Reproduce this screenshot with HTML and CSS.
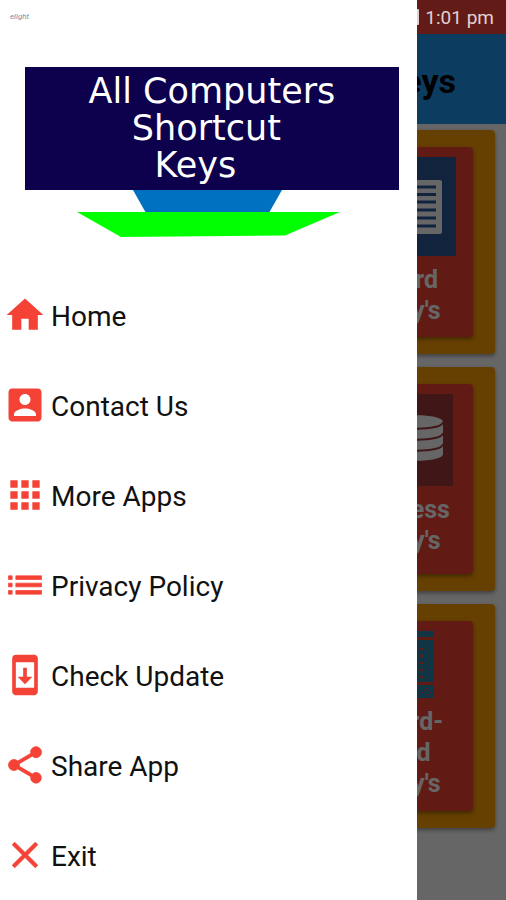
FILE: index.html
```html
<!DOCTYPE html>
<html lang="en">
<head>
<meta charset="utf-8">
<meta name="viewport" content="width=device-width, initial-scale=1">
<title>All Computers Shortcut Keys</title>
<link rel="stylesheet" href="styles.css">
</head>
<body>
<div class="app">
  <div class="status">
    <span class="battery"></span>
    <span>1:01 pm</span>
  </div>
  <div class="screen">
    <header class="appbar"><h1 class="appbar-title">Computer Shortcut Keys</h1></header>
    <main class="cards">
      <section class="card">
        <div class="card-inner">
          <svg class="pic" width="154" height="99" viewBox="0 0 154 99" aria-hidden="true">
            <rect width="154" height="99" fill="#2b579a"/>
            <rect x="80" y="23" width="60" height="54" rx="2" fill="#fff"/>
            <path d="M80 30h54M80 37.500h54M80 45h54M80 53h54M80 61h54M80 69h54" stroke="#2b579a" stroke-width="3"/>
          </svg>
          <h2 class="card-title">MS - Word<br>Short key's</h2>
        </div>
      </section>
      <section class="card">
        <div class="card-inner">
          <svg class="pic" width="148" height="92" viewBox="0 0 148 92" aria-hidden="true">
            <rect width="148" height="92" fill="#a4373a"/>
            <path d="M86 28c0-9 52-9 52 0v32c0 9-52 9-52 0z" fill="#fff"/>
            <path d="M86 28c0 9 52 9 52 0M86 39c0 9 52 9 52 0M86 50c0 9 52 9 52 0" fill="none" stroke="#a4373a" stroke-width="2"/>
          </svg>
          <h2 class="card-title">MS - Access<br>Short key's</h2>
        </div>
      </section>
      <section class="card">
        <div class="card-inner">
          <svg class="pic" width="110" height="67" viewBox="0 0 110 67" aria-hidden="true">
            <path d="M70 0h40v6H70zM70 9h40v42H70zM70 54h40v13H70z" fill="#2d86b0"/>
            <path d="M80 18h20M80 25h20M80 32h20M80 39h20M80 46h20" stroke="#f44336" stroke-width="2"/>
            <path d="M94 12v38M89 12v38" stroke="#2d86b0" stroke-width="2"/>
            <path d="M97 63l7-7M103 65l5-5" stroke="#f44336" stroke-width="1"/>
          </svg>
          <h2 class="card-title">MS - Word-<br>MS - Pad<br>Short key's</h2>
        </div>
      </section>
    </main>
  </div>
  <div class="scrim"></div>
  <aside class="drawer">
    <div class="mark">elight</div>
    <div class="logo">
      <div class="logo-text">All Computers<br>Shortcut&nbsp;<br>Keys&nbsp;&nbsp;&nbsp;</div>
      <svg class="stand" viewBox="0 0 374 48" aria-hidden="true">
        <path d="M108 0h149l-13 23H121z" fill="#0070c0"/>
        <path d="M52 22h263l-55 23.500L96 47z" fill="#0f0"/>
      </svg>
    </div>
    <nav class="menu">
      <a class="item" href="#home"><svg class="icon" viewBox="0 0 24 24" aria-hidden="true"><path d="M10 20v-6h4v6h5v-8h3L12 3 2 12h3v8z"/></svg><span class="label">Home</span></a>
      <a class="item" href="#contact"><svg class="icon" viewBox="0 0 24 24" aria-hidden="true"><path d="M3 5v14c0 1.100.89 2 2 2h14c1.100 0 2-.9 2-2V5c0-1.100-.9-2-2-2H5c-1.110 0-2 .9-2 2zm12 4c0 1.660-1.340 3-3 3s-3-1.340-3-3 1.340-3 3-3 3 1.340 3 3zm-9 8c0-2 4-3.100 6-3.100s6 1.100 6 3.100v1H6v-1z"/></svg><span class="label">Contact Us</span></a>
      <a class="item" href="#apps"><svg class="icon" viewBox="0 0 24 24" aria-hidden="true"><path d="M4 8h4V4H4v4zm6 12h4v-4h-4v4zm-6 0h4v-4H4v4zm0-6h4v-4H4v4zm6 0h4v-4h-4v4zm6-10v4h4V4h-4zm-6 4h4V4h-4v4zm6 6h4v-4h-4v4zm0 6h4v-4h-4v4z"/></svg><span class="label">More Apps</span></a>
      <a class="item" href="#privacy"><svg class="icon heavy" viewBox="0 0 24 24" aria-hidden="true"><path d="M3 13h2v-2H3v2zm0 4h2v-2H3v2zm0-8h2V7H3v2zm4 4h14v-2H7v2zm0 4h14v-2H7v2zM7 7v2h14V7H7z"/></svg><span class="label">Privacy Policy</span></a>
      <a class="item" href="#update"><svg class="icon" viewBox="0 0 24 24" aria-hidden="true"><path d="M17 1.010L7 1c-1.100 0-2 .9-2 2v18c0 1.100.9 2 2 2h10c1.100 0 2-.9 2-2V3c0-1.100-.9-1.990-2-1.990zM17 19H7V5h10v14zm-1-6h-3V8h-2v5H8l4 4 4-4z"/></svg><span class="label">Check Update</span></a>
      <a class="item" href="#share"><svg class="icon heavy" viewBox="0 0 24 24" aria-hidden="true"><path d="M18 16.080c-.76 0-1.440.3-1.960.77L8.910 12.700c.05-.23.09-.46.09-.7s-.04-.47-.09-.7l7.050-4.110c.54.5 1.250.81 2.040.81 1.660 0 3-1.340 3-3s-1.340-3-3-3-3 1.340-3 3c0 .24.04.47.09.7L8.040 9.810C7.500 9.310 6.790 9 6 9c-1.660 0-3 1.340-3 3s1.340 3 3 3c.79 0 1.500-.31 2.040-.81l7.120 4.160c-.05.21-.08.43-.08.65 0 1.610 1.310 2.920 2.920 2.920s2.920-1.310 2.920-2.920-1.310-2.920-2.920-2.920z"/></svg><span class="label">Share App</span></a>
      <a class="item" href="#exit"><svg class="icon heavy" viewBox="0 0 24 24" aria-hidden="true"><path d="M19 6.410L17.590 5 12 10.590 6.410 5 5 6.410 10.590 12 5 17.590 6.410 19 12 13.410 17.590 19 19 17.590 13.410 12z"/></svg><span class="label">Exit</span></a>
    </nav>
  </aside>
</div>
</body>
</html>
```
FILE: styles.css
```css
* { box-sizing: border-box; }

body {
  margin: 0;
  font-family: Roboto, "Liberation Sans", sans-serif;
  background: #fff;
}

.app {
  position: relative;
  min-height: 100vh;
  overflow: hidden;
}

/* Status bar */
.status {
  display: flex;
  align-items: center;
  justify-content: flex-end;
  gap: 6px;
  height: 34px;
  padding-right: 12px;
  background: #621b16;
  color: #e0d2d1;
  font-size: 19px;
}

.battery {
  width: 10px;
  height: 16px;
  border-radius: 1px;
  background: #e0d2d1;
}

/* Page behind the drawer */
.appbar {
  display: flex;
  align-items: center;
  justify-content: flex-end;
  height: 90px;
  padding: 4px 50px 0 0;
  background: #2196f3;
}

.appbar-title {
  margin: 0;
  font-size: 34px;
  font-weight: 700;
  white-space: nowrap;
  color: #000;
}

.cards {
  display: grid;
  gap: 13px;
  padding: 6px 11px 20px 52%;
}

.card {
  padding: 17px 22px;
  border-radius: 4px;
  background: #ffa000;
  box-shadow: 0 2px 4px rgba(0, 0, 0, 0.4);
}

.card-inner {
  display: flex;
  flex-direction: column;
  align-items: center;
  gap: 8px;
  min-height: 190px;
  padding-top: 10px;
  border-radius: 4px;
  background: #f44336;
  box-shadow: 0 2px 4px rgba(0, 0, 0, 0.4);
}

.pic { display: block; }

.card-title {
  margin: 0;
  font-size: 25px;
  line-height: 31px;
  font-weight: 700;
  text-align: center;
  white-space: nowrap;
  color: #fff;
}

.scrim {
  position: absolute;
  inset: 34px 0 0;
  background: rgba(0, 0, 0, 0.6);
}

/* Drawer */
.drawer {
  position: absolute;
  top: 0;
  bottom: 0;
  left: 0;
  width: 82.4%;
  background: #fff;
}

.mark {
  height: 67px;
  padding: 13px 10px;
  font-size: 8px;
  line-height: 8px;
  font-style: italic;
  color: #8888a0;
}

.logo { padding: 0 18px 0 25px; }

.logo-text {
  padding: 6px 0;
  background: #0d004c;
  color: #fff;
  font-family: "DejaVu Sans", sans-serif;
  font-size: 35px;
  line-height: 37px;
  text-align: center;
}

.stand {
  display: block;
  width: 100%;
}

.menu { padding-top: 32px; }

.item {
  display: flex;
  align-items: center;
  gap: 4px;
  height: 90px;
  padding-left: 3px;
  color: #111;
  font-size: 28px;
  text-decoration: none;
}

.label { padding-top: 4px; }

.icon {
  width: 44px;
  height: 44px;
  fill: #f44336;
}

.heavy {
  stroke: #f44336;
  stroke-width: 0.4;
}
```
